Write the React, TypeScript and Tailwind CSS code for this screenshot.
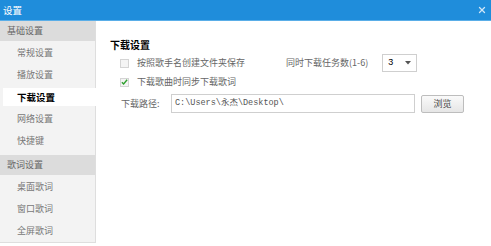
import { X } from "lucide-react";

const font = { fontFamily: '"Noto Sans CJK SC", "Noto Sans", sans-serif' };

function NavGroup({ title, items, active }: { title: string; items: string[]; active?: string }) {
  return (
    <div>
      <div className="h-[20px] bg-[#dcdcdc] pl-[7px] flex items-center text-[9px] text-[#666]">{title}</div>
      <div className="pl-[3px] pt-[1px]">
        {items.map((it) =>
          it === active ? (
            <div key={it} className="h-[22px] py-[2px] mr-[-1px]">
              <div className="h-full bg-white pl-[14px] flex items-center text-[9.5px] font-bold text-black">{it}</div>
            </div>
          ) : (
            <div key={it} className="h-[22px] pl-[14px] flex items-center text-[9px] text-[#777]">
              {it}
            </div>
          )
        )}
      </div>
    </div>
  );
}

function Check({ checked, label }: { checked?: boolean; label: string }) {
  return (
    <div className="flex items-center gap-[8px] h-[20px]">
      <div className="w-[9px] h-[9px] border border-[#d4d4d4] bg-[#f4f4f4] flex items-center justify-center">
        {checked && (
          <svg width="8" height="8" viewBox="0 0 8 8">
            <path d="M1 4.2 L3 6.2 L7 1.5" stroke="#2ea02e" strokeWidth="1.6" fill="none" />
          </svg>
        )}
      </div>
      <span className="text-[9px] text-[#666]">{label}</span>
    </div>
  );
}

export default function App() {
  return (
    <div className="w-[491px] h-[246px] bg-white flex flex-col overflow-hidden" style={font}>
      {/* title bar */}
      <div className="h-[21px] bg-[#1f8ddb] border-b border-[#5aaee8] flex items-center justify-between px-[3px] shrink-0">
        <span className="text-[9.5px] text-white">设置</span>
        <X size={10} strokeWidth={3} className="text-[#cfe6f7] mr-[1px]" />
      </div>

      <div className="flex flex-1">
        {/* sidebar */}
        <div className="w-[96px] h-[222px] bg-[#f3f3f3] border-r border-b border-[#dedede] flex flex-col gap-[3px] shrink-0">
          <NavGroup title="基础设置" items={["常规设置", "播放设置", "下载设置", "网络设置", "快捷键"]} active="下载设置" />
          <NavGroup title="歌词设置" items={["桌面歌词", "窗口歌词", "全屏歌词"]} />
        </div>

        {/* content */}
        <div className="flex-1 pl-[14px] pt-[17px]">
          <div className="text-[10px] font-bold text-black leading-[14px]">下载设置</div>
          <div className="pl-[10px] mt-[1px]">
            <div className="flex items-center">
              <div className="w-[166px]">
                <Check label="按照歌手名创建文件夹保存" />
              </div>
              <span className="text-[9px] text-[#666]">同时下载任务数(1-6)</span>
              <div className="ml-[14px] w-[35px] h-[18px] border border-[#cfcfcf] flex items-center justify-between px-[5px]">
                <span className="text-[9px] text-black" style={{ fontFamily: '"Liberation Sans", sans-serif' }}>3</span>
                <svg width="6" height="4" viewBox="0 0 6 4">
                  <path d="M0 0 H6 L3 3.5 Z" fill="#555" />
                </svg>
              </div>
            </div>
            <div className="mt-[-1px]">
              <Check checked label="下载歌曲时同步下载歌词" />
            </div>
            <div className="flex items-center mt-[2px]">
              <span className="text-[9px] text-[#666] w-[51px] pl-[1px]">下载路径:</span>
              <div className="w-[244px] h-[19px] border border-[#cfcfcf] flex items-center pl-[3px]">
                <span
                  className="text-[8.5px] text-[#555]"
                  style={{ fontFamily: '"Liberation Mono", "Noto Sans CJK SC", monospace' }}
                >
                  C:\Users\永杰\Desktop\
                </span>
              </div>
              <button className="ml-[6px] w-[43px] h-[18px] border border-[#bdbdbd] rounded-[2px] bg-gradient-to-b from-[#fafafa] to-[#e6e6e6] text-[9px] text-[#444] flex items-center justify-center">
                浏览
              </button>
            </div>
          </div>
        </div>
      </div>
    </div>
  );
}
